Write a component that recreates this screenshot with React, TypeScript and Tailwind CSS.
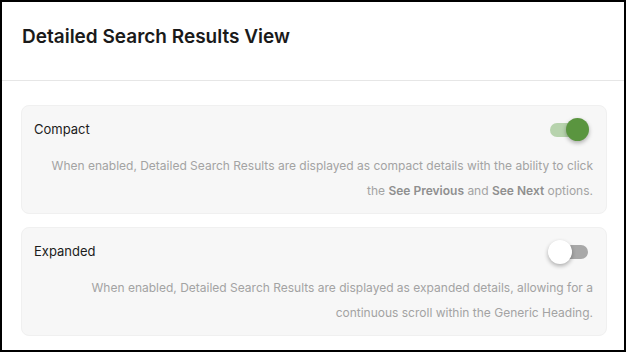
import { useState } from 'react'

type Mode = 'compact' | 'expanded'

function Toggle({ on, onClick }: { on: boolean; onClick: () => void }) {
  return (
    <button
      onClick={onClick}
      className="relative flex h-[24px] w-[44px] items-center"
      aria-pressed={on}
    >
      <span
        className={
          on
            ? 'ml-[3px] h-[14px] w-[38px] rounded-full bg-[#b7d3ad]'
            : 'ml-[3px] h-[14px] w-[38px] rounded-full bg-[#a8a8a8]'
        }
      />
      <span
        className={
          on
            ? 'absolute left-[19px] top-[0px] h-[23px] w-[23px] rounded-full bg-[#5a953f] shadow-[0_2px_4px_rgba(0,0,0,0.3)]'
            : 'absolute left-[1px] top-[0px] h-[24px] w-[24px] rounded-full bg-white shadow-[0_2px_4px_rgba(0,0,0,0.3)]'
        }
      />
    </button>
  )
}

function OptionCard({
  label,
  on,
  onToggle,
  children,
}: {
  label: string
  on: boolean
  onToggle: () => void
  children: React.ReactNode
}) {
  return (
    <div className="rounded-[8px] border border-[#f0f0f0] bg-[#f7f7f7] px-[12px] pb-[10px] pt-[12px]">
      <div className="flex h-[24px] items-center justify-between pr-[3px]">
        <span className="text-[13px] text-[#1c1c1c]">{label}</span>
        <Toggle on={on} onClick={onToggle} />
      </div>
      <p className="mt-[11px] whitespace-nowrap pr-[1px] text-right text-[12px] leading-[25px] text-[#a3a3a3]">
        {children}
      </p>
    </div>
  )
}

export default function App() {
  const [mode, setMode] = useState<Mode>('compact')

  return (
    <div
      className="h-[352px] w-[626px] border-2 border-black bg-white"
      style={{ fontFamily: 'Inter, "Noto Sans", sans-serif' }}
    >
      <div className="flex h-[79px] items-center border-b border-[#e6e6e6] pl-[20px]">
        <h2 className="pb-[8px] text-[19px] font-semibold text-[#1a1a1a]">
          Detailed Search Results View
        </h2>
      </div>

      <div className="flex flex-col gap-[13px] pl-[19px] pr-[17px] pt-[24px]">
        <OptionCard label="Compact" on={mode === 'compact'} onToggle={() => setMode('compact')}>
          When enabled, Detailed Search Results are displayed as compact details with the ability to
          click
          <br />
          the <span className="font-semibold text-[#8f8f8f]">See Previous</span> and{' '}
          <span className="font-semibold text-[#8f8f8f]">See Next</span> options.
        </OptionCard>
        <OptionCard label="Expanded" on={mode === 'expanded'} onToggle={() => setMode('expanded')}>
          When enabled, Detailed Search Results are displayed as expanded details, allowing for a
          <br />
          continuous scroll within the Generic Heading.
        </OptionCard>
      </div>
    </div>
  )
}
